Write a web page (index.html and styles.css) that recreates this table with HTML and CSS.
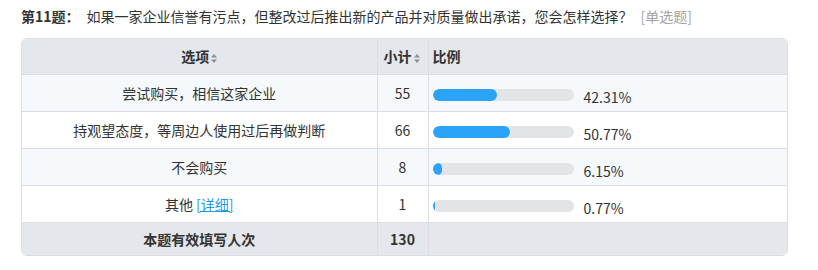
FILE: index.html
```html
<!DOCTYPE html>
<html lang="zh">
<head>
<meta charset="utf-8">
<link rel="stylesheet" href="styles.css">
</head>
<body>
<div class="wrap">
  <div class="title"><span class="qno">第11题：</span><span class="qtext">如果一家企业信誉有污点，但整改过后推出新的产品并对质量做出承诺，您会怎样选择？</span><span class="qtype">[单选题]</span></div>
  <div class="box">
    <table class="stat">
      <thead>
        <tr>
          <th class="c-opt">选项<svg class="sort" width="6" height="9" viewBox="0 0 6 9"><path d="M3 0L6 3.5H0Z M3 9L0 5.5H6Z" fill="#8a8d92"/></svg></th>
          <th class="c-cnt">小计<svg class="sort" width="6" height="9" viewBox="0 0 6 9"><path d="M3 0L6 3.5H0Z M3 9L0 5.5H6Z" fill="#8a8d92"/></svg></th>
          <th class="c-pct">比例</th>
        </tr>
      </thead>
      <tbody>
        <tr class="alt">
          <td class="c-opt">尝试购买，相信这家企业</td>
          <td class="c-cnt">55</td>
          <td class="c-pct"><span class="bar"><span class="fill" style="width:64px"></span></span><span class="pv">42.31%</span></td>
        </tr>
        <tr>
          <td class="c-opt">持观望态度，等周边人使用过后再做判断</td>
          <td class="c-cnt">66</td>
          <td class="c-pct"><span class="bar"><span class="fill" style="width:77px"></span></span><span class="pv">50.77%</span></td>
        </tr>
        <tr class="alt">
          <td class="c-opt">不会购买</td>
          <td class="c-cnt">8</td>
          <td class="c-pct"><span class="bar"><span class="fill" style="width:9px"></span></span><span class="pv">6.15%</span></td>
        </tr>
        <tr>
          <td class="c-opt">其他 <a class="detail" href="#">[详细]</a></td>
          <td class="c-cnt">1</td>
          <td class="c-pct"><span class="bar"><span class="fill thin" style="width:2px"></span></span><span class="pv">0.77%</span></td>
        </tr>
      </tbody>
      <tfoot>
        <tr>
          <td class="c-opt">本题有效填写人次</td>
          <td class="c-cnt">130</td>
          <td class="c-pct"></td>
        </tr>
      </tfoot>
    </table>
  </div>
</div>
</body>
</html>
```
FILE: styles.css
```css
* { box-sizing: border-box; }
body {
  margin: 0;
  background: #fff;
  font-family: "Noto Sans CJK SC", "Noto Sans", sans-serif;
  color: #333;
}
.wrap {
  padding: 7px 0 0 21px;
}
.title {
  font-size: 14px;
  line-height: 18px;
  height: 31px;
  color: #333;
}
.qno {
  font-weight: bold;
  margin-right: 7px;
}
.qtype {
  color: #a3a3a3;
  margin-left: 8px;
}
.box {
  width: 767px;
  border: 1px solid #dadde2;
  border-radius: 6px;
  overflow: hidden;
}
.stat {
  width: 100%;
  border-collapse: collapse;
  font-size: 14px;
  table-layout: fixed;
}
.stat th, .stat td {
  padding: 0;
  border-left: 1px solid #dadde2;
  border-bottom: 1px solid #dadde2;
}
.stat th:first-child, .stat td:first-child { border-left: none; }
.stat tfoot td { border-bottom: none; }
.c-opt { width: 355px; text-align: center; }
.c-cnt { width: 51px; text-align: center; }
.c-pct { text-align: left; padding-left: 4px !important; }
.stat thead th {
  background: #e4e7eb;
  height: 35px;
  font-weight: bold;
  color: #333;
}
.stat thead th.c-cnt { text-align: left; padding-left: 6px; }
.sort {
  margin-left: 2px;
  vertical-align: -1px;
}
.stat tbody td {
  height: 37px;
  background: #fff;
}
.stat tbody tr.alt td { background: #f5f9fc; }
.stat tfoot td {
  background: #e4e7eb;
  height: 33px;
  font-weight: bold;
}
.bar {
  display: inline-block;
  width: 141px;
  height: 12px;
  background: #e3e4e6;
  border-radius: 6px;
  vertical-align: middle;
  overflow: hidden;
  position: relative;
  top: 1px;
}
.fill {
  display: block;
  height: 100%;
  background: #2aa3f8;
  border-radius: 6px;
}
.fill.thin { border-radius: 0; }
.pv {
  margin-left: 10px;
  vertical-align: middle;
  position: relative;
  top: 3px;
}
.detail {
  color: #1e9ae8;
  text-decoration: underline;
}
```
